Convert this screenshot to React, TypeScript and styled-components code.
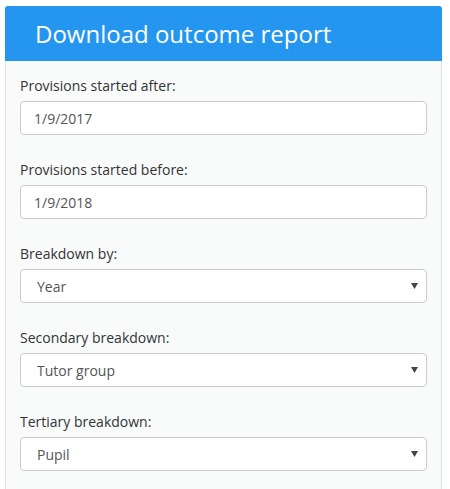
import React from "react";
import styled, { createGlobalStyle } from "styled-components";

const Global = createGlobalStyle`
  html, body { margin: 0; padding: 0; background: #ffffff; }
  body { font-family: "Open Sans", "Liberation Sans", sans-serif; }
  * { box-sizing: border-box; }
`;

const Page = styled.div`
  padding: 6px 8px 0 5px;
`;

const Panel = styled.section`
  width: 437px;
  border: 1px solid #dfe3e6;
  border-top: none;
  border-radius: 3px 3px 0 0;
  background: #f9fbfb;
`;

const Header = styled.header`
  background: #2496ef;
  height: 55px;
  margin: 0 -1px;
  border-radius: 3px 3px 0 0;
  display: flex;
  align-items: center;
  padding-left: 30px;
`;

const Title = styled.h2`
  margin: 0;
  color: #ffffff;
  font-size: 24px;
  font-weight: 400;
  line-height: 1;
`;

const Body = styled.div`
  padding: 15px 14px 30px 14px;
  display: flex;
  flex-direction: column;
  gap: 25px;
`;

const Group = styled.div`
  display: flex;
  flex-direction: column;
  gap: 5px;
`;

const Label = styled.label`
  font-size: 14px;
  line-height: 20px;
  color: #333333;
`;

const Input = styled.input`
  height: 34px;
  width: 100%;
  border: 1px solid #cccccc;
  border-radius: 4px;
  background: #ffffff;
  padding: 6px 12px 6px 13px;
  font-family: inherit;
  font-size: 14px;
  color: #555555;
  outline: none;
`;

const SelectWrap = styled.div`
  position: relative;
`;

const Select = styled.select`
  appearance: none;
  -webkit-appearance: none;
  height: 34px;
  width: 100%;
  border: 1px solid #cccccc;
  border-radius: 4px;
  background: #ffffff;
  padding: 6px 12px 6px 16px;
  font-family: inherit;
  font-size: 14px;
  color: #555555;
  outline: none;
`;

const Arrow = styled.svg`
  position: absolute;
  right: 9px;
  top: 14px;
  pointer-events: none;
`;

function Field({ label, value }: { label: string; value: string }) {
  return (
    <Group>
      <Label>{label}</Label>
      <Input defaultValue={value} />
    </Group>
  );
}

function SelectField({ label, value }: { label: string; value: string }) {
  return (
    <Group>
      <Label>{label}</Label>
      <SelectWrap>
        <Select defaultValue={value}>
          <option>{value}</option>
        </Select>
        <Arrow width="7" height="6" viewBox="0 0 7 6">
          <path d="M0 0 H7 L3.5 6 Z" fill="#444" />
        </Arrow>
      </SelectWrap>
    </Group>
  );
}

export default function App() {
  return (
    <Page>
      <Global />
      <Panel>
        <Header>
          <Title>Download outcome report</Title>
        </Header>
        <Body>
          <Field label="Provisions started after:" value="1/9/2017" />
          <Field label="Provisions started before:" value="1/9/2018" />
          <SelectField label="Breakdown by:" value="Year" />
          <SelectField label="Secondary breakdown:" value="Tutor group" />
          <SelectField label="Tertiary breakdown:" value="Pupil" />
        </Body>
      </Panel>
    </Page>
  );
}
